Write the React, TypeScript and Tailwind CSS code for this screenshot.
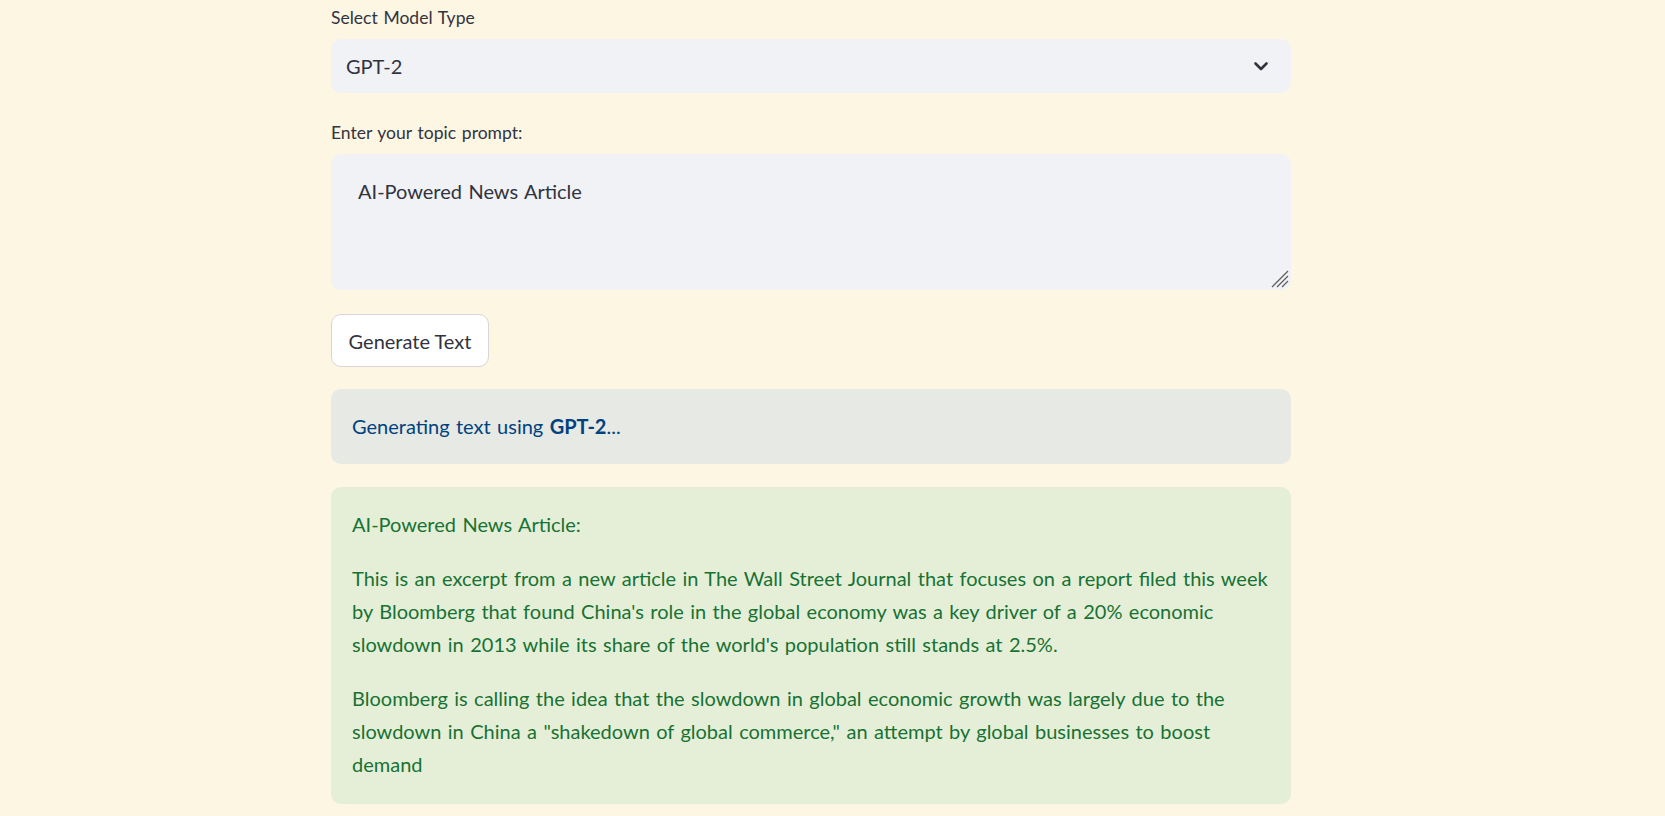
import React, { useState } from 'react';

const font = { fontFamily: '"Lato", "Liberation Sans", sans-serif' };

const App = () => {
  const [prompt, setPrompt] = useState('AI-Powered News Article');

  return (
    <div className="min-h-[816px] bg-[#fdf6e3] text-[#31333f] [word-spacing:1.3px]" style={font}>
      <div className="ml-[331px] w-[960px] pt-[5px] flex flex-col">
        <label className="text-[17.5px] leading-[26px] mb-[8px]">Select Model Type</label>
        <div className="h-[54px] rounded-[10px] bg-[#f0f2f6] flex items-center justify-between pl-[15px] pr-[22px]">
          <span className="text-[20px]">GPT-2</span>
          <svg width="16" height="16" viewBox="0 0 16 16" fill="none">
            <path d="M2.5 5.5 L8 11 L13.5 5.5" stroke="#31333f" strokeWidth="2.6" strokeLinecap="round" strokeLinejoin="round" />
          </svg>
        </div>

        <label className="text-[17.5px] leading-[26px] mt-[27px] mb-[8px]">Enter your topic prompt:</label>
        <div className="relative h-[136px] rounded-[10px] bg-[#f0f2f6]">
          <textarea
            value={prompt}
            onChange={(e) => setPrompt(e.target.value)}
            className="w-full h-full resize-none bg-transparent outline-none pl-[27px] pr-[20px] pt-[21px] text-[20px] leading-[33px] text-[#31333f] [word-spacing:1.3px]"
            style={font}
          />
          {/* resize grip */}
          <svg className="absolute right-[2px] bottom-[2px]" width="19" height="19" viewBox="0 0 19 19">
            <path d="M18 2 L2 18 M18 7 L7 18 M18 12 L12 18" stroke="#5f5f5f" strokeWidth="1.3" />
          </svg>
        </div>

        <div className="mt-[24px]">
          <button className="h-[53px] w-[158px] rounded-[10px] border border-[#d6d6d9] bg-white text-[20px] text-[#31333f] [word-spacing:0px]">
            Generate Text
          </button>
        </div>

        <div className="mt-[22px] rounded-[10px] bg-[#e6e9e4] px-[21px] py-[21px] text-[20px] leading-[33px] text-[#004280]">
          Generating text using <b className="font-bold">GPT-2</b>...
        </div>

        <div className="mt-[23px] rounded-[10px] bg-[#e5efd8] pl-[21px] pr-[16px] pt-[21px] pb-[23px] text-[20px] leading-[33px] text-[#177233] flex flex-col gap-[21px]">
          <p>AI-Powered News Article:</p>
          <p>
            This is an excerpt from a new article in The Wall Street Journal that focuses on a report filed this week by
            Bloomberg that found China's role in the global economy was a key driver of a 20% economic slowdown in 2013
            while its share of the world's population still stands at 2.5%.
          </p>
          <p>
            Bloomberg is calling the idea that the slowdown in global economic growth was largely due to the slowdown in
            China a "shakedown of global commerce," an attempt by global businesses to boost demand
          </p>
        </div>
      </div>
    </div>
  );
};

export default App;
